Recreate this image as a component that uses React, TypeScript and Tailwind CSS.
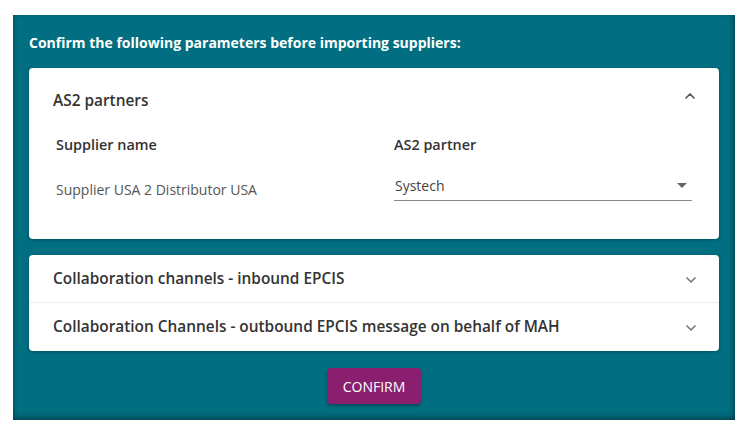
import { ChevronDown, ChevronUp } from "lucide-react";

const AS2Card = () => {
  return (
    <div className="h-[171px] rounded bg-white shadow-[0_1px_3px_rgba(0,0,0,0.3)]">
      <div className="flex h-[64px] items-center justify-between pl-6 pr-[21px]">
        <span className="mt-[2px] text-[15.4px] font-semibold text-[#333]">AS2 partners</span>
        <ChevronUp className="-mt-2 h-[16px] w-[16px] text-[#555]" strokeWidth={2.5} />
      </div>
      <div className="grid grid-cols-[338px_298px] pl-[27px]">
        <div className="pt-[2px] text-[14.4px] font-semibold text-[#333]">Supplier name</div>
        <div className="pt-[2px] text-[14.4px] font-semibold text-[#333]">AS2 partner</div>
        <div className="pt-[23px] text-[14px] text-[#555]">Supplier USA 2 Distributor USA</div>
        <div className="mt-[15px] flex h-[30px] items-center justify-between border-b border-[#8a8a8a] pl-[1px] pr-[5px]">
          <span className="text-[14px] text-[#444]">Systech</span>
          <span className="h-0 w-0 border-x-[5px] border-t-[5px] border-x-transparent border-t-[#666]" />
        </div>
      </div>
    </div>
  );
};

const channels = [
  "Collaboration channels - inbound EPCIS",
  "Collaboration Channels - outbound EPCIS message on behalf of MAH",
];

export default function App() {
  return (
    <div className="h-[435px] w-[742px] bg-white pl-[13px] pt-[15px] font-['Open_Sans',sans-serif]">
      <div className="flex h-[405px] w-[722px] flex-col bg-[#016f81] px-4 shadow-[inset_0_-5px_6px_-2px_rgba(0,0,0,0.3),inset_-4px_0_5px_-2px_rgba(0,0,0,0.3),inset_3px_0_4px_-2px_rgba(0,0,0,0.2)]">
        <h1 className="pt-[19px] text-[14px] font-bold leading-[18px] text-white">
          Confirm the following parameters before importing suppliers:
        </h1>
        <div className="mt-[16px]">
          <AS2Card />
        </div>
        <div className="mt-4 rounded bg-white shadow-[0_1px_3px_rgba(0,0,0,0.3)]">
          {channels.map((title, i) => (
            <div
              key={title}
              className={`flex h-[48px] items-center justify-between pl-6 pr-[20px] ${
                i === 0 ? "border-b border-[#eee]" : ""
              }`}
            >
              <span className="text-[15.4px] font-semibold text-[#333]">{title}</span>
              <ChevronDown className="mt-[2px] h-[16px] w-[16px] text-[#777]" strokeWidth={2.5} />
            </div>
          ))}
        </div>
        <div className="mt-[17px] flex justify-center">
          <button className="h-[36px] w-[94px] rounded bg-[#8b1f6f] text-[14px] font-medium text-white shadow-[0_2px_3px_rgba(0,0,0,0.3)]">
            CONFIRM
          </button>
        </div>
      </div>
    </div>
  );
}
